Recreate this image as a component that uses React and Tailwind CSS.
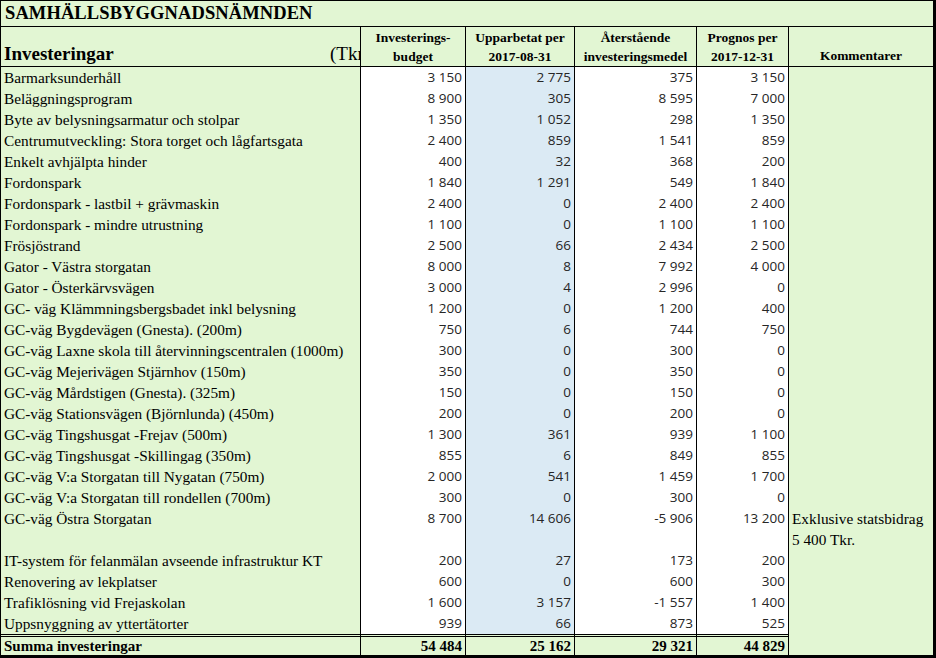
import React from 'react';

const rows = [
  ['Barmarksunderhåll', '3 150', '2 775', '375', '3 150', ''],
  ['Beläggningsprogram', '8 900', '305', '8 595', '7 000', ''],
  ['Byte av belysningsarmatur och stolpar', '1 350', '1 052', '298', '1 350', ''],
  ['Centrumutveckling: Stora torget och lågfartsgata', '2 400', '859', '1 541', '859', ''],
  ['Enkelt avhjälpta hinder', '400', '32', '368', '200', ''],
  ['Fordonspark', '1 840', '1 291', '549', '1 840', ''],
  ['Fordonspark - lastbil + grävmaskin', '2 400', '0', '2 400', '2 400', ''],
  ['Fordonspark - mindre utrustning', '1 100', '0', '1 100', '1 100', ''],
  ['Frösjöstrand', '2 500', '66', '2 434', '2 500', ''],
  ['Gator - Västra storgatan', '8 000', '8', '7 992', '4 000', ''],
  ['Gator - Österkärvsvägen', '3 000', '4', '2 996', '0', ''],
  ['GC- väg Klämmningsbergsbadet inkl belysning', '1 200', '0', '1 200', '400', ''],
  ['GC-väg Bygdevägen (Gnesta). (200m)', '750', '6', '744', '750', ''],
  ['GC-väg Laxne skola till återvinningscentralen (1000m)', '300', '0', '300', '0', ''],
  ['GC-väg Mejerivägen Stjärnhov (150m)', '350', '0', '350', '0', ''],
  ['GC-väg Mårdstigen (Gnesta). (325m)', '150', '0', '150', '0', ''],
  ['GC-väg Stationsvägen (Björnlunda) (450m)', '200', '0', '200', '0', ''],
  ['GC-väg Tingshusgat -Frejav (500m)', '1 300', '361', '939', '1 100', ''],
  ['GC-väg Tingshusgat -Skillingag (350m)', '855', '6', '849', '855', ''],
  ['GC-väg V:a Storgatan till Nygatan (750m)', '2 000', '541', '1 459', '1 700', ''],
  ['GC-väg V:a Storgatan till rondellen (700m)', '300', '0', '300', '0', ''],
  ['GC-väg Östra Storgatan', '8 700', '14 606', '-5 906', '13 200', 'Exklusive statsbidrag'],
  ['', '', '', '', '', '5 400 Tkr.'],
  ['IT-system för felanmälan avseende infrastruktur KT', '200', '27', '173', '200', ''],
  ['Renovering av lekplatser', '600', '0', '600', '300', ''],
  ['Trafiklösning vid Frejaskolan', '1 600', '3 157', '-1 557', '1 400', ''],
  ['Uppsnyggning av yttertätorter', '939', '66', '873', '525', ''],
];

const serif = "font-['Liberation_Serif',serif]";
const num = "font-['Open_Sans',sans-serif] text-[13.5px] text-[#262626] text-right pr-[3px] leading-[21px]";

export default function App() {
  return (
    <div className={`w-[936px] h-[658px] bg-[#e2f6d3] border-t border-l border-black border-r-[3px] border-b-[3px] overflow-hidden text-black ${serif}`}>
      {/* Titel */}
      <div className="h-[26px] border-b border-black flex items-center pl-[4px]">
        <span className={`text-[18.5px] font-bold tracking-[0.1px] ${serif}`}>SAMHÄLLSBYGGNADSNÄMNDEN</span>
      </div>

      {/* Kolumnrubriker */}
      <div className={`h-[40px] border-b border-black flex text-[13.5px] font-bold leading-[19px] ${serif}`}>
        <div className="w-[360px] border-r border-black flex items-end justify-between pl-[3px] pb-0 overflow-hidden">
          <span className="text-[19px] leading-[24px]">Investeringar</span>
          <span className="text-[19px] font-normal leading-[24px] w-[30px] whitespace-nowrap overflow-hidden">(Tkr)</span>
        </div>
        <div className="w-[105px] border-r border-black flex flex-col items-center justify-center">
          <span>Investerings-</span>
          <span>budget</span>
        </div>
        <div className="w-[109px] border-r border-black flex flex-col items-center justify-center">
          <span>Upparbetat per</span>
          <span>2017-08-31</span>
        </div>
        <div className="w-[122px] border-r border-black flex flex-col items-center justify-center">
          <span>Återstående</span>
          <span>investeringsmedel</span>
        </div>
        <div className="w-[92px] border-r border-black flex flex-col items-center justify-center">
          <span>Prognos per</span>
          <span>2017-12-31</span>
        </div>
        <div className="flex-1 flex items-end justify-center pb-[1px]">
          <span>Kommentarer</span>
        </div>
      </div>

      {/* Rader */}
      {rows.map((r, i) => (
        <div key={i} className="h-[21px] flex">
          <div className={`w-[360px] border-r border-black pl-[3px] text-[15.3px] leading-[21px] whitespace-nowrap ${serif}`}>{r[0]}</div>
          <div className={`w-[105px] border-r border-black bg-white ${num}`}>{r[1]}</div>
          <div className={`w-[109px] border-r border-black bg-[#dbeaf4] ${num}`}>{r[2]}</div>
          <div className={`w-[122px] border-r border-black bg-white ${num}`}>{r[3]}</div>
          <div className={`w-[92px] border-r border-black bg-white ${num}`}>{r[4]}</div>
          <div className={`flex-1 pl-[3px] text-[15.3px] leading-[21px] whitespace-nowrap ${serif}`}>{r[5]}</div>
        </div>
      ))}

      {/* Summa */}
      <div className={`h-[21px] flex font-bold text-[15px] leading-[18px] ${serif}`}>
        <div className="w-[360px] border-t-[3px] border-double border-r border-black pl-[3px]">Summa investeringar</div>
        <div className="w-[105px] border-t-[3px] border-double border-r border-black text-right pr-[3px]">54 484</div>
        <div className="w-[109px] border-t-[3px] border-double border-r border-black text-right pr-[3px]">25 162</div>
        <div className="w-[122px] border-t-[3px] border-double border-r border-black text-right pr-[3px]">29 321</div>
        <div className="w-[92px] border-t-[3px] border-double border-r border-black text-right pr-[3px]">44 829</div>
        <div className="flex-1"></div>
      </div>
    </div>
  );
}
